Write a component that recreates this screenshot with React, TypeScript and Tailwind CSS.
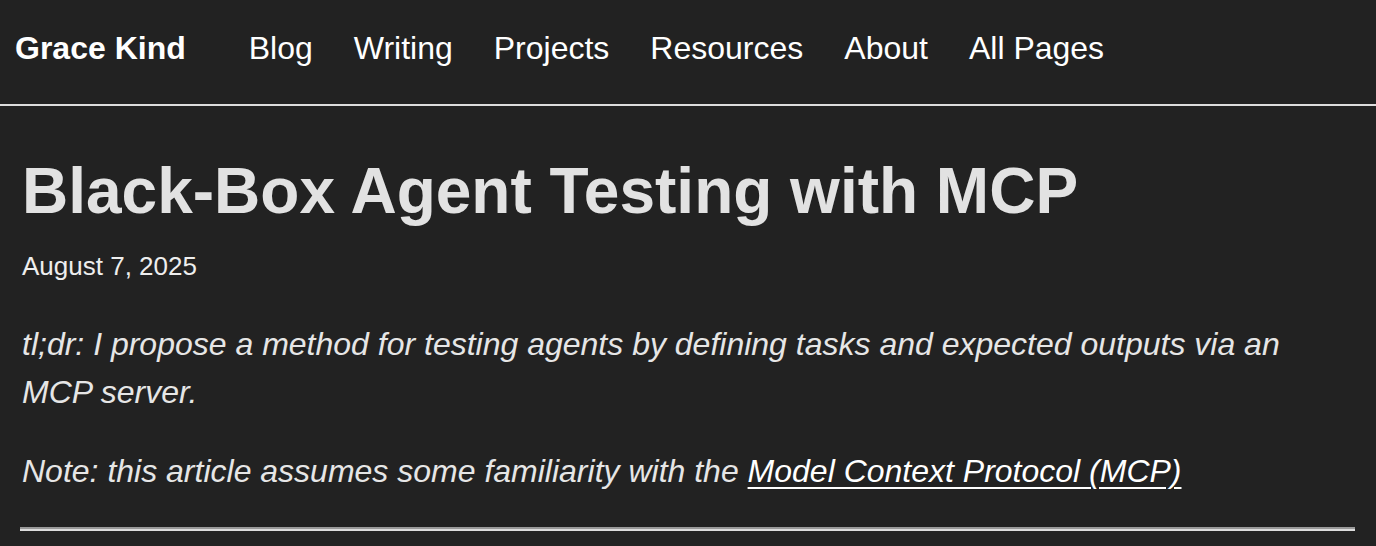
const navLinks = ['Blog', 'Writing', 'Projects', 'Resources', 'About', 'All Pages'];

export default function App() {
  return (
    <div className="min-h-screen bg-[#222222] text-[#e2e2e2] font-['Liberation_Sans',Arial,sans-serif]">
      <header className="h-[106px] border-b-2 border-[#dddddd] flex items-center pl-[15px] pb-[8px]">
        <a href="#" className="text-[32px] font-bold text-white mr-[63px] leading-none">
          Grace Kind
        </a>
        <nav className="flex gap-[41px] text-[32px] text-white leading-none">
          {navLinks.map((l) => (
            <a key={l} href="#">
              {l}
            </a>
          ))}
        </nav>
      </header>

      <main className="px-[20px] pr-[21px]">
        <h1 className="mt-[49px] pl-[2px] text-[64px] leading-[72px] font-bold text-[#e2e2e2]">
          Black-Box Agent Testing with MCP
        </h1>
        <p className="mt-[23px] pl-[2px] text-[26px] leading-[32px] text-[#eeeeee]">August 7, 2025</p>
        <p className="mt-[38px] pl-[2px] text-[32px] leading-[48px] italic text-[#e6e6e6] max-w-[1300px]">
          tl;dr: I propose a method for testing agents by defining tasks and expected outputs via an MCP server.
        </p>
        <p className="mt-[31px] pl-[2px] text-[32px] leading-[48px] italic text-[#e6e6e6]">
          Note: this article assumes some familiarity with the{' '}
          <a href="#" className="text-white underline underline-offset-[5px] decoration-2">
            Model Context Protocol (MCP)
          </a>
        </p>
        <hr className="mt-[32px] h-0 border-t-2 border-b-2 border-t-[#9a9a9a] border-b-[#dcdcdc]" />
      </main>
    </div>
  );
}
